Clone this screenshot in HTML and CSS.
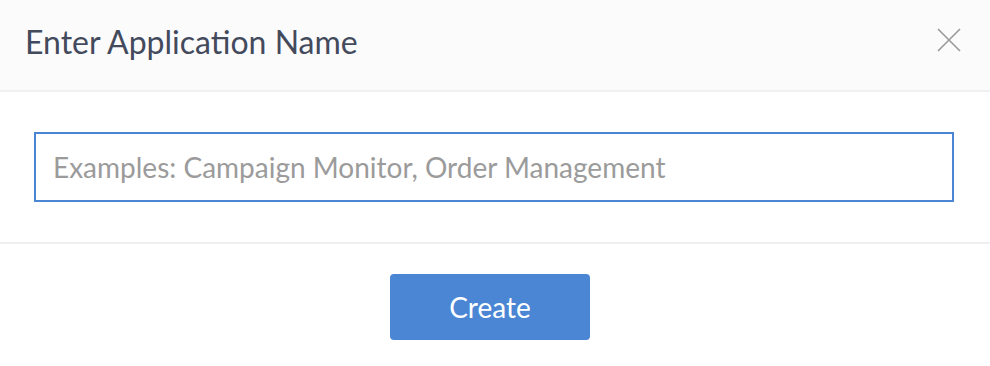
FILE: index.html
```html
<!DOCTYPE html>
<html lang="en">
<head>
  <meta charset="UTF-8">
  <title>Enter Application Name</title>
  <link rel="stylesheet" href="styles.css">
</head>
<body>
  <div class="modal">
    <div class="modal-header">
      <h2>Enter Application Name</h2>
      <button class="close" aria-label="Close">
        <svg width="24" height="24" viewBox="0 0 24 24">
          <path d="M1 1 L23 23 M23 1 L1 23" stroke="#9a9a9a" stroke-width="1.6" fill="none"/>
        </svg>
      </button>
    </div>
    <div class="modal-body">
      <input type="text" class="name-input" placeholder="Examples: Campaign Monitor, Order Management">
    </div>
    <div class="modal-footer">
      <button class="create">Create</button>
    </div>
  </div>
</body>
</html>
```

FILE: styles.css
```css
body {
  margin: 0;
  background: #fff;
  font-family: Lato, "Open Sans", sans-serif;
}
.modal {
  width: 990px;
  height: 366px;
  overflow: hidden;
}
.modal-header {
  box-sizing: border-box;
  height: 92px;
  background: #fbfbfc;
  border-bottom: 2px solid #f0f0f2;
  display: flex;
  align-items: center;
  justify-content: space-between;
  padding: 0 29px 8px 25px;
}
.modal-header h2 {
  margin: 0;
  font-size: 32px;
  font-weight: 400;
  color: #434a5c;
}
.close {
  background: none;
  border: 0;
  padding: 0;
  width: 24px;
  height: 24px;
  margin-bottom: 3px;
  display: flex;
}
.modal-body {
  padding: 40px 36px 40px 34px;
  border-bottom: 2px solid #f0f0f2;
}
.name-input {
  display: block;
  width: 100%;
  height: 70px;
  box-sizing: border-box;
  border: 2px solid #4a86d4;
  padding: 0 17px;
  font-family: Lato, "Open Sans", sans-serif;
  font-size: 28px;
  color: #333;
  outline: none;
}
.name-input::placeholder {
  color: #9b9b9b;
}
.modal-footer {
  display: flex;
  justify-content: center;
  padding: 30px 10px 0 0;
}
.create {
  width: 200px;
  height: 66px;
  background: #4a86d4;
  color: #fff;
  border: 0;
  border-radius: 4px;
  font-family: Lato, "Open Sans", sans-serif;
  font-size: 28px;
}
```
